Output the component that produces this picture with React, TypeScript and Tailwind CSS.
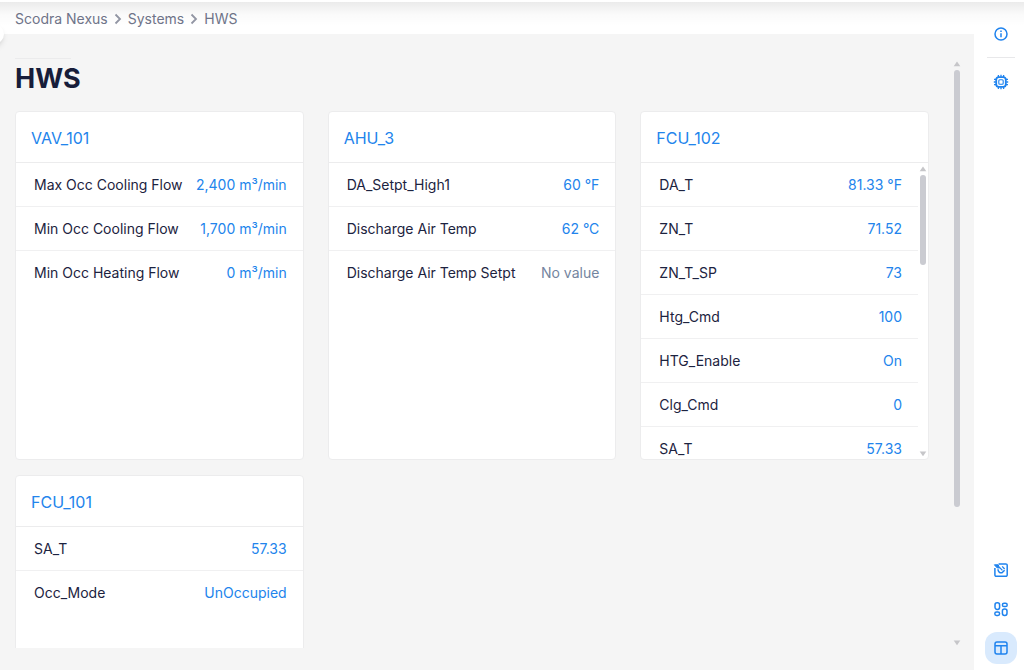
import React from 'react';

interface Point {
  name: string;
  value: string | null;
}

interface Equipment {
  name: string;
  points: Point[];
  scrollable?: boolean;
}

const EQUIPMENT: Equipment[] = [
  {
    name: 'VAV_101',
    points: [
      { name: 'Max Occ Cooling Flow', value: '2,400 m³/min' },
      { name: 'Min Occ Cooling Flow', value: '1,700 m³/min' },
      { name: 'Min Occ Heating Flow', value: '0 m³/min' },
    ],
  },
  {
    name: 'AHU_3',
    points: [
      { name: 'DA_Setpt_High1', value: '60 °F' },
      { name: 'Discharge Air Temp', value: '62 °C' },
      { name: 'Discharge Air Temp Setpt', value: null },
    ],
  },
  {
    name: 'FCU_102',
    scrollable: true,
    points: [
      { name: 'DA_T', value: '81.33 °F' },
      { name: 'ZN_T', value: '71.52' },
      { name: 'ZN_T_SP', value: '73' },
      { name: 'Htg_Cmd', value: '100' },
      { name: 'HTG_Enable', value: 'On' },
      { name: 'Clg_Cmd', value: '0' },
      { name: 'SA_T', value: '57.33' },
    ],
  },
  {
    name: 'FCU_101',
    points: [
      { name: 'SA_T', value: '57.33' },
      { name: 'Occ_Mode', value: 'UnOccupied' },
    ],
  },
];

const CRUMBS = ['Scodra Nexus', 'Systems', 'HWS'];

const Arrow: React.FC<{ down?: boolean }> = ({ down }) => (
  <svg width="8" height="6" viewBox="0 0 8 6" fill="#c6c6c9" className="shrink-0">
    <path d={down ? 'M.7 .5h6.6L4 5.2z' : 'M4 .5 7.3 5.2H.7z'} />
  </svg>
);

const Scrollbar: React.FC<{ thumb: number }> = ({ thumb }) => (
  <div className="flex flex-col items-center gap-[3px] w-2 shrink-0" aria-hidden="true">
    <Arrow />
    <div className="flex-1 w-1.5">
      <div className="w-1.5 rounded-full bg-[#cacbd1]" style={{ height: `${thumb}%` }} />
    </div>
    <Arrow down />
  </div>
);

const PointTable: React.FC<{ points: Point[] }> = ({ points }) => (
  <table className="w-full border-separate border-spacing-0 text-sm">
    <tbody>
      {points.map(p => (
        <tr key={p.name} className="group">
          <th scope="row" className="h-11 pl-[18px] border-b border-[#f0f0f1] group-last:border-transparent text-left font-normal text-[#1c2340] whitespace-nowrap">
            {p.name}
          </th>
          <td className="pr-4 border-b border-[#f0f0f1] group-last:border-transparent text-right whitespace-nowrap text-[#2284ec]">
            {p.value === null ? <span className="text-[#7485a0]">No value</span> : p.value}
          </td>
        </tr>
      ))}
    </tbody>
  </table>
);

const EquipmentCard: React.FC<{ item: Equipment }> = ({ item }) => (
  <section className="flex flex-col h-[349px] bg-white border border-[#ececed] rounded overflow-hidden">
    <h2 className="shrink-0 h-[51px] pt-0.5 px-[15px] flex items-center border-b border-[#ececed]">
      <a href="#" className="text-base text-[#2284ec]">{item.name}</a>
    </h2>
    <div className="flex flex-1 min-h-0">
      <div className="flex-1 min-w-0 overflow-y-auto [scrollbar-width:none]">
        <PointTable points={item.points} />
      </div>
      {item.scrollable && (
        <div className="flex pt-[3px] pb-0.5 px-px">
          <Scrollbar thumb={33} />
        </div>
      )}
    </div>
  </section>
);

const InfoIcon = () => (
  <svg width="16" height="16" viewBox="0 0 16 16" fill="none" stroke="currentColor" strokeWidth="1.5">
    <circle cx="8" cy="8" r="6" />
    <path d="M8 7.2v4M8 4.6v1.4" />
  </svg>
);

const ChipIcon = () => (
  <svg width="16" height="16" viewBox="0 0 16 16" fill="none" stroke="currentColor" strokeWidth="1.8">
    <rect x="3.2" y="3.2" width="9.6" height="9.6" rx="2.6" />
    <rect x="5.8" y="5.8" width="4.4" height="4.4" rx="1" strokeWidth="1.1" />
    <path d="M5.4 1v2M8 .8v2M10.6 1v2M5.4 13v2M8 13.2v2M10.6 13v2M1 5.4h2M.8 8h2M1 10.6h2M13 5.4h2M13.2 8h2M13 10.6h2" strokeWidth="1.3" />
  </svg>
);

const GraphicIcon = () => (
  <svg width="16" height="16" viewBox="0 0 16 16" fill="none" stroke="currentColor" strokeWidth="1.5" strokeLinejoin="round">
    <path d="M5.6 1.9h7.2a1.4 1.4 0 0 1 1.4 1.4v9.6a1.4 1.4 0 0 1-1.4 1.4H3.3a1.4 1.4 0 0 1-1.4-1.4V6" />
    <path d="M1.4 2.8h3.8L6.6 6 4 5.8z" fill="currentColor" strokeWidth="1" />
    <path d="M5 7.2c0 2.6 1.8 4 4 3.6l2.6-2.6" />
    <path d="m6.8 5.6 2.6 2.8M9.2 4.4l2.4 2.6" strokeWidth="1.3" />
  </svg>
);

const AppsIcon = () => (
  <svg width="16" height="16" viewBox="0 0 16 16" fill="none" stroke="currentColor" strokeWidth="1.5">
    <rect x="2" y="1.8" width="4.6" height="6.6" rx="2.1" />
    <rect x="9.4" y="2.2" width="4.8" height="3.4" rx="1.7" />
    <rect x="1.8" y="11" width="4.8" height="3.4" rx="1.7" />
    <rect x="9.4" y="8" width="4.6" height="6.4" rx="2.1" />
  </svg>
);

const LayoutIcon = () => (
  <svg width="16" height="16" viewBox="0 0 16 16" fill="none" stroke="currentColor" strokeWidth="1.5">
    <rect x="2" y="2" width="12" height="12" rx="2" />
    <path d="M2 5.7h12M8 5.7V14" />
  </svg>
);

const RailButton: React.FC<{ label: string; active?: boolean; children: React.ReactNode }> = ({ label, active, children }) => (
  <button
    aria-label={label}
    className={`size-8 flex items-center justify-center rounded-xl text-[#1f83ee] cursor-pointer ${active ? 'bg-[#d9eafd]' : ''}`}
  >
    {children}
  </button>
);

const App: React.FC = () => (
  <div className="relative h-screen flex overflow-hidden bg-white font-['Inter',sans-serif]">
    {/* Shadow cast by the app bar above */}
    <div className="absolute inset-x-0 top-0.5 h-6 bg-linear-to-b from-black/8 via-black/2 to-transparent pointer-events-none" />
    {/* Handle of the collapsed side menu */}
    <div className="absolute -left-4 top-6 size-5 rounded-full bg-white shadow-md" />

    <div className="flex-1 min-w-0 flex flex-col">
      <nav aria-label="Breadcrumb" className="shrink-0 h-[34px] pt-1 px-[15px] flex items-center">
        <ol className="flex items-center text-sm text-[#70758a]">
          {CRUMBS.map((c, i) => (
            <li key={c} className="flex items-center">
              {i > 0 && (
                <svg width="8" height="12" viewBox="0 0 8 12" fill="none" stroke="#9397a5" strokeWidth="1.8" className="mx-1.5">
                  <path d="m1.5 1.5 4.5 4.5-4.5 4.5" />
                </svg>
              )}
              <a href="#">{c}</a>
            </li>
          ))}
        </ol>
      </nav>

      <main className="flex-1 min-h-0 flex pt-6 pb-[22px] pl-[15px] pr-[13px] bg-[#f5f5f5]">
        <div className="flex-1 min-w-0 overflow-y-auto [scrollbar-width:none]">
          <div className="w-14 h-px bg-[#ebebec]" />
          <h1 className="h-[52px] pt-0.5 text-[27px] leading-9 font-bold text-[#171d3a]">HWS</h1>
          <div className="grid grid-cols-3 gap-x-6 gap-y-[15px]">
            {EQUIPMENT.map(item => (
              <EquipmentCard key={item.name} item={item} />
            ))}
          </div>
        </div>
        <div className="flex pt-[3px] pb-0.5 pl-6">
          <Scrollbar thumb={77} />
        </div>
      </main>
    </div>

    <aside className="w-[50px] shrink-0 flex flex-col items-center pt-[18px] pb-1.5 pl-1">
      <RailButton label="Info"><InfoIcon /></RailButton>
      <hr className="w-7 mt-[7px] mb-2 border-[#e8e8ea]" />
      <RailButton label="Devices"><ChipIcon /></RailButton>
      <div className="mt-auto flex flex-col gap-[7px]">
        <RailButton label="Graphics"><GraphicIcon /></RailButton>
        <RailButton label="Apps"><AppsIcon /></RailButton>
        <RailButton label="Layout" active><LayoutIcon /></RailButton>
      </div>
    </aside>
  </div>
);

export default App;
